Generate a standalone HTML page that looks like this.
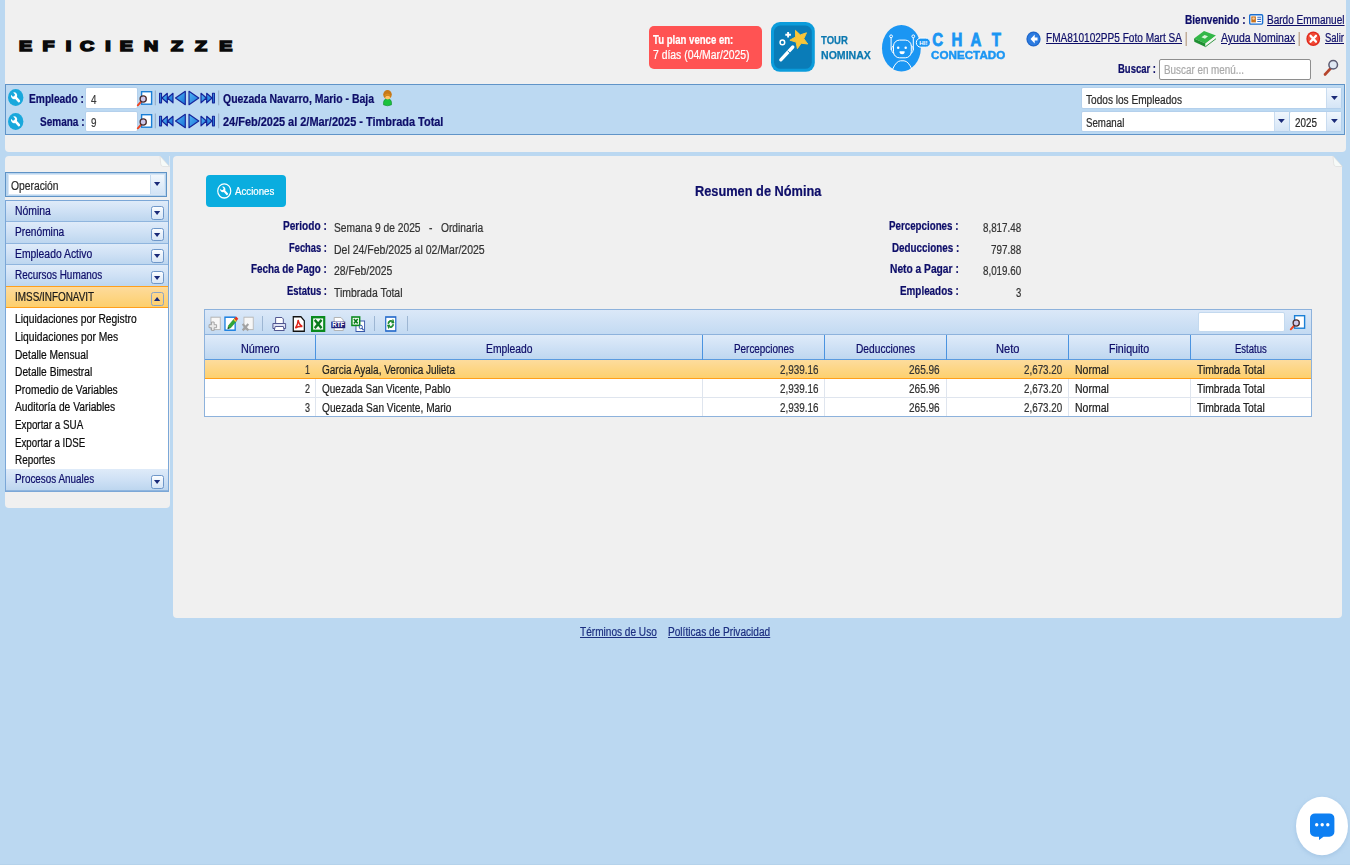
<!DOCTYPE html>
<html lang="es">
<head>
<meta charset="utf-8">
<title>Resumen de Nómina</title>
<style>
*{box-sizing:border-box;margin:0;padding:0}
html,body{width:1350px;height:865px;overflow:hidden}
body{position:relative;background:#bbd8f1;font-family:"Liberation Sans",sans-serif;font-size:12px;color:#2b2b2b}
.t{position:absolute;white-space:nowrap;transform-origin:0 50%;display:block;-webkit-text-stroke:.22px currentColor}
.u{text-decoration:underline}
.abs{position:absolute}
.panel{position:absolute;background:#f0f0f0}
svg{position:absolute;overflow:visible}
</style>
</head>
<body>
<header>
<div class="panel" style="left:4.6px;top:0;width:1341px;height:152px;border-radius:0 0 4px 4px"></div>
<svg style="left:0;top:30px" width="260" height="32"><text transform="scale(1.400 1)" x="13.5 30.4 46.9 57.1 75.1 85.5 102.8 122.1 139.2 156.7" y="21.3" font-family="Liberation Sans, sans-serif" font-weight="700" font-size="14" fill="#0a0a0a" stroke="#0a0a0a" stroke-width="1.5" stroke-linejoin="miter">EFICIENZZE</text></svg>
<div class="abs" style="left:649px;top:25.5px;width:113px;height:43.5px;background:#ff5353;border-radius:5px"></div>
<span class="t" style="left:652.7px;top:31.5px;font-size:12px;line-height:17px;color:#fff;font-weight:700;transform:scaleX(0.7993);">Tu plan vence en:</span>
<span class="t" style="left:652.7px;top:46.5px;font-size:12px;line-height:17px;color:#fff;transform:scaleX(0.8662);">7 días (04/Mar/2025)</span>
<svg style="left:770.9px;top:22px" width="43.8" height="49.800" viewBox="0 0 43.800 49.800">
<rect width="43.800" height="49.800" rx="9" fill="#0b9cdb"/><rect x="3" y="3.500" width="37.800" height="43.300" rx="6.500" fill="#0a7cb8"/>
<path d="M9.800 37.800L21.800 25" stroke="#fff" stroke-width="3.300" stroke-linecap="round"/><path d="M16.600 28.800l2.600 2.400" stroke="#0a7cb8" stroke-width=".9"/>
<path d="M24.5 8.4L29.3 12.9L35.5 10.8L32.8 16.7L36.7 22.0L30.2 21.2L26.4 26.6L25.1 20.1L18.9 18.2L24.6 15.0z" fill="#f9c639" stroke="#f9c639" stroke-width="1" stroke-linejoin="round"/>
<circle cx="11.400" cy="20.400" r="2.300" fill="none" stroke="#fff" stroke-width="1.500"/><path d="M17.100 9.900v5.600M14.300 12.700h5.600" stroke="#fff" stroke-width="1.900"/></svg>
<span class="t" style="left:821.1px;top:32.6px;font-size:10.5px;line-height:15px;color:#0b78b0;font-weight:700;transform:scaleX(0.9066);-webkit-text-stroke:.25px #0b78b0;">TOUR</span>
<span class="t" style="left:821.1px;top:48.4px;font-size:10.5px;line-height:15px;color:#0b78b0;font-weight:700;transform:scaleX(1.0062);-webkit-text-stroke:.25px #0b78b0;">NOMINAX</span>
<svg style="left:881.5px;top:24.5px" width="50" height="47" viewBox="0 0 50 47">
<ellipse cx="19.4" cy="23.2" rx="19.4" ry="23.2" fill="#1b96f3"/>
<g fill="none" stroke="#fff" stroke-width="1">
<path d="M9.1 25V12.8M31.300 25V12.800"/><circle cx="9.100" cy="11.300" r="1.400"/><circle cx="31.300" cy="11.300" r="1.400"/>
<rect x="11.500" y="15.100" width="17.800" height="17.700" rx="6"/>
<path d="M11.500 20.500Q7.500 24 11.500 28.500M29.300 20.500Q33.300 24 29.300 28.500"/>
<path d="M10.500 44.500Q14 36.200 18.500 35.800H22Q26.500 36.200 30 44.500"/>
</g>
<circle cx="16.200" cy="22.700" r="1.250" fill="#fff"/><circle cx="23.700" cy="22.700" r="1.250" fill="#fff"/><path d="M17.600 26.200h5v1a2.500 2 0 0 1-5 0z" fill="#fff"/>
<rect x="34.300" y="13.100" width="14.100" height="9.100" rx="4.500" fill="#1b96f3" stroke="#fff" stroke-width="1"/>
<text x="37.300" y="20" font-family="Liberation Sans, sans-serif" font-weight="700" font-size="5.500" fill="#fff" textLength="8.200" lengthAdjust="spacingAndGlyphs">HI!</text>
</svg>
<svg style="left:0;top:26px" width="1020" height="26"><text transform="scale(0.860 1)" x="1084.0 1106.3 1128.5 1153.3" y="20.200" font-family="Liberation Sans, sans-serif" font-weight="700" font-size="17.500" fill="#1b96f3" stroke="#1b96f3" stroke-width=".8">CHAT</text></svg>
<span class="t" style="left:931.2px;top:46.7px;font-size:11.2px;line-height:16px;color:#1b96f3;font-weight:700;transform:scaleX(1.0426);-webkit-text-stroke:.45px #1b96f3;">CONECTADO</span>
<span class="t" style="left:1185.0px;top:12.3px;font-size:12px;line-height:17px;color:#0e0e69;font-weight:700;transform:scaleX(0.8401);">Bienvenido :</span>
<svg style="left:1248.600px;top:13.700px" width="14.300" height="10.800" viewBox="0 0 14.300 10.800"><rect x=".7" y=".7" width="12.900" height="9.400" rx="1" fill="#fff" stroke="#1a6fd0" stroke-width="1.400"/><rect x="2.300" y="2.400" width="4.600" height="6" fill="#c9731d"/><circle cx="4.600" cy="4.500" r="1.300" fill="#f6c99a"/><path d="M8.300 3.300h3.800M8.300 5.400h3.800M8.300 7.500h3.800" stroke="#3a6fc4" stroke-width="1.100"/></svg>
<span class="t u" style="left:1266.5px;top:11.8px;font-size:12px;line-height:17px;color:#0e0e69;transform:scaleX(0.8359);">Bardo Emmanuel</span>
<svg style="left:1026px;top:30.500px" width="15" height="16" viewBox="0 0 16 16" preserveAspectRatio="none"><circle cx="8" cy="8" r="7.600" fill="#1f66c9"/><circle cx="8" cy="8" r="6.300" fill="#2c7be0"/><path d="M9.300 3.600L4.800 8l4.500 4.400V9.600h3V6.400h-3z" fill="#fff"/></svg>
<span class="t u" style="left:1046.0px;top:30.3px;font-size:12px;line-height:17px;color:#0e0e69;transform:scaleX(0.8391);">FMA810102PP5 Foto Mart SA</span>
<span class="t" style="left:1185.3px;top:28.2px;font-size:14px;line-height:20px;color:#a98a6c;transform:scaleX(0.6592);">|</span>
<svg style="left:1193px;top:29.500px" width="23" height="17" viewBox="0 0 23 17"><path d="M1 8.500L11 1l12 4.500L12.500 13.500z" fill="#33b748"/><path d="M1 8.500l11.500 5v3.400L1.300 11.700z" fill="#1f8f32"/><path d="M12.500 13.500L23 5.500v2.700l-10.500 8z" fill="#f4f4f0"/><path d="M12.500 16.700L23 8.700" stroke="#1f8f32" stroke-width=".9"/><path d="M8.500 7.300l3-2.300 3.500 1.300-3 2.400z" fill="#d8f3d8"/></svg>
<span class="t u" style="left:1221.0px;top:30.3px;font-size:12px;line-height:17px;color:#0e0e69;transform:scaleX(0.8757);">Ayuda Nominax</span>
<span class="t" style="left:1297.8px;top:28.2px;font-size:14px;line-height:20px;color:#a98a6c;transform:scaleX(0.6592);">|</span>
<svg style="left:1306px;top:31px" width="14.500" height="15.500" viewBox="0 0 16 16" preserveAspectRatio="none"><circle cx="8" cy="8" r="7.600" fill="#e0281c"/><circle cx="8" cy="8" r="6.200" fill="#f04a35"/><path d="M5 5l6 6M11 5l-6 6" stroke="#fff" stroke-width="2.400" stroke-linecap="round"/></svg>
<span class="t u" style="left:1325.0px;top:30.3px;font-size:12px;line-height:17px;color:#0e0e69;transform:scaleX(0.7912);">Salir</span>
<span class="t" style="left:1118.0px;top:60.8px;font-size:12px;line-height:17px;color:#0e0e69;font-weight:700;transform:scaleX(0.7912);">Buscar :</span>
<div class="abs" style="left:1159px;top:58.600px;width:152px;height:21.400px;background:#fff;border:1px solid #8e8e8e;border-radius:2px"></div>
<span class="t" style="left:1164.0px;top:62.0px;font-size:12px;line-height:17px;color:#a9a9a9;transform:scaleX(0.8214);">Buscar en menú...</span>
<svg style="left:1323px;top:58.500px" width="16" height="17" viewBox="0 0 16 17"><path d="M2 15.500L8 9" stroke="#b5452c" stroke-width="2.600" stroke-linecap="round"/><circle cx="10.200" cy="5.800" r="4.300" fill="#dfe7f3" stroke="#5a5a72" stroke-width="1.500"/></svg>
<div class="abs" style="left:5px;top:84.300px;width:1340px;height:50.500px;background:#bcd9f2;border:1px solid #6094c8"></div>
<svg style="left:8px;top:89.3px" width="15.4" height="17" viewBox="0 0 16 16" preserveAspectRatio="none"><circle cx="8" cy="8" r="8" fill="#19a8dc"/><path transform="translate(16 0) scale(-1 1)" d="M10.600 3.200a3.200 3.200 0 0 0-3.900 4.300L3.600 10.600a1.300 1.300 0 0 0 1.800 1.800l3.100-3.100a3.200 3.200 0 0 0 4.300-3.900L10.900 7.300 9.300 6.700 8.700 5.100z" fill="#fff"/></svg>
<svg style="left:8px;top:112.7px" width="15.4" height="17" viewBox="0 0 16 16" preserveAspectRatio="none"><circle cx="8" cy="8" r="8" fill="#19a8dc"/><path transform="translate(16 0) scale(-1 1)" d="M10.600 3.200a3.200 3.200 0 0 0-3.900 4.300L3.600 10.600a1.300 1.300 0 0 0 1.800 1.800l3.100-3.100a3.200 3.200 0 0 0 4.300-3.900L10.900 7.300 9.300 6.700 8.700 5.100z" fill="#fff"/></svg>
<span class="t" style="left:29.0px;top:91.0px;font-size:12px;line-height:17px;color:#0e0e69;font-weight:700;transform:scaleX(0.8502);">Empleado :</span>
<span class="t" style="left:39.5px;top:114.3px;font-size:12px;line-height:17px;color:#0e0e69;font-weight:700;transform:scaleX(0.8340);">Semana :</span>
<div class="abs" style="left:84.7px;top:86.7px;width:53.4px;height:22.4px;background:#fff;border:1px solid #b4d0ec;border-radius:2px"></div>
<div class="abs" style="left:84.7px;top:110.5px;width:53.4px;height:21.8px;background:#fff;border:1px solid #b4d0ec;border-radius:2px"></div>
<span class="t" style="left:91.0px;top:91.5px;font-size:12px;line-height:17px;color:#3a3a3a;transform:scaleX(0.8224);">4</span>
<span class="t" style="left:91.0px;top:115.0px;font-size:12px;line-height:17px;color:#3a3a3a;transform:scaleX(0.8224);">9</span>
<svg style="left:136.5px;top:91px" width="16" height="15" viewBox="0 0 16 15"><rect x="4.600" y=".7" width="10" height="12.500" fill="#fff" stroke="#1a7fd6" stroke-width="1.400"/><path d="M.8 14.300L3.800 11" stroke="#f0451f" stroke-width="1.900" stroke-linecap="round"/><circle cx="6.200" cy="8" r="3.100" fill="#cfc8ea" stroke="#4a2c2c" stroke-width="1.300"/></svg>
<svg style="left:136.5px;top:114.3px" width="16" height="15" viewBox="0 0 16 15"><rect x="4.600" y=".7" width="10" height="12.500" fill="#fff" stroke="#1a7fd6" stroke-width="1.400"/><path d="M.8 14.300L3.800 11" stroke="#f0451f" stroke-width="1.900" stroke-linecap="round"/><circle cx="6.200" cy="8" r="3.100" fill="#cfc8ea" stroke="#4a2c2c" stroke-width="1.300"/></svg>
<svg width="0" height="0" style="left:0;top:0"><defs><linearGradient id="ng" x1="0" y1="0" x2="1" y2="1"><stop offset="0" stop-color="#55b8f6"/><stop offset="1" stop-color="#1670d6"/></linearGradient></defs></svg>
<svg style="left:154px;top:89.9px" width="68" height="16" viewBox="0 0 68 16">
<path d="M1.300 .5v14.800M64.700 .5v14.800" stroke="#93a9c4" stroke-width="1"/>
<g fill="url(#ng)" stroke="#16259a" stroke-width="1.150" stroke-linejoin="round">
<rect x="5.600" y="3.200" width="1.900" height="9.600"/><path d="M13.300 3.200L7.900 8l5.400 4.800zM19 3.200L13.600 8l5.400 4.800z"/>
<path d="M31.300 1.300L21.500 8l9.800 6.700z"/>
<path d="M35 1.300L44.800 8 35 14.700z"/>
<path d="M47 3.200L52.400 8 47 12.800zM52.700 3.200L58.100 8l-5.400 4.800z"/><rect x="58.500" y="3.200" width="1.900" height="9.600"/>
</g></svg>
<svg style="left:154px;top:113.2px" width="68" height="16" viewBox="0 0 68 16">
<path d="M1.300 .5v14.800M64.700 .5v14.800" stroke="#93a9c4" stroke-width="1"/>
<g fill="url(#ng)" stroke="#16259a" stroke-width="1.150" stroke-linejoin="round">
<rect x="5.600" y="3.200" width="1.900" height="9.600"/><path d="M13.300 3.200L7.900 8l5.400 4.800zM19 3.200L13.600 8l5.400 4.800z"/>
<path d="M31.300 1.300L21.500 8l9.800 6.700z"/>
<path d="M35 1.300L44.800 8 35 14.700z"/>
<path d="M47 3.200L52.400 8 47 12.800zM52.700 3.200L58.100 8l-5.400 4.800z"/><rect x="58.500" y="3.200" width="1.900" height="9.600"/>
</g></svg>
<span class="t" style="left:223.0px;top:91.0px;font-size:12px;line-height:17px;color:#0e0e69;font-weight:700;transform:scaleX(0.8709);">Quezada Navarro, Mario - Baja</span>
<span class="t" style="left:223.0px;top:114.3px;font-size:12px;line-height:17px;color:#0e0e69;font-weight:700;transform:scaleX(0.9120);">24/Feb/2025 al 2/Mar/2025 - Timbrada Total</span>
<svg style="left:383.200px;top:89.900px" width="9" height="16" viewBox="0 0 9 16"><path d="M.5 14.800Q-.2 9 4.500 8.600 9.200 9 8.500 14.800 4.500 16.800 .5 14.800z" fill="#19c23c" stroke="#0f8a2a" stroke-width=".6"/><ellipse cx="4.500" cy="4.600" rx="4.300" ry="4.500" fill="#c67818"/><ellipse cx="4.700" cy="7.600" rx="2.500" ry="1.900" fill="#ffc468"/><path d="M1.200 6.500Q4.500 4.500 7.800 6.500 7 3.500 4.500 3.500T1.200 6.500z" fill="#d98c20"/></svg>
<div class="abs" style="left:1080.5px;top:86.6px;width:261.9px;height:22.4px;background:#fff;border:1px solid #b4d0ec;border-radius:2px"></div>
<div class="abs" style="left:1326.4px;top:87.6px;width:15px;height:20.4px;background:linear-gradient(#f0f6fd,#d5e5f6);border-left:1px solid #c9dcf0"></div>
<svg style="left:1330.7px;top:95.8px" width="6.800" height="4" viewBox="0 0 6.800 4"><path d="M0 0h6.800L3.400 4z" fill="#1a2a78"/></svg>
<div class="abs" style="left:1080.5px;top:110.8px;width:209.3px;height:21.2px;background:#fff;border:1px solid #b4d0ec;border-radius:2px"></div>
<div class="abs" style="left:1273.8px;top:111.8px;width:15px;height:19.2px;background:linear-gradient(#f0f6fd,#d5e5f6);border-left:1px solid #c9dcf0"></div>
<svg style="left:1278.1px;top:119.4px" width="6.800" height="4" viewBox="0 0 6.800 4"><path d="M0 0h6.800L3.400 4z" fill="#1a2a78"/></svg>
<div class="abs" style="left:1289.3px;top:110.8px;width:53.1px;height:21.2px;background:#fff;border:1px solid #b4d0ec;border-radius:2px"></div>
<div class="abs" style="left:1326.4px;top:111.8px;width:15px;height:19.2px;background:linear-gradient(#f0f6fd,#d5e5f6);border-left:1px solid #c9dcf0"></div>
<svg style="left:1330.7px;top:119.4px" width="6.800" height="4" viewBox="0 0 6.800 4"><path d="M0 0h6.800L3.400 4z" fill="#1a2a78"/></svg>
<span class="t" style="left:1086.0px;top:91.6px;font-size:12px;line-height:17px;color:#2b2b2b;transform:scaleX(0.8415);">Todos los Empleados</span>
<span class="t" style="left:1086.0px;top:114.9px;font-size:12px;line-height:17px;color:#2b2b2b;transform:scaleX(0.8084);">Semanal</span>
<span class="t" style="left:1294.6px;top:114.9px;font-size:12px;line-height:17px;color:#2b2b2b;transform:scaleX(0.8201);">2025</span>
</header>
<aside>
<div class="panel" style="left:4.6px;top:156px;width:165.2px;height:352.4px;border-radius:4px 0 4px 4px"></div>
<svg style="left:160.4px;top:156px" width="9.400" height="10.500" viewBox="0 0 9.400 10.500"><path d="M0 0H9.400V10.500Z" fill="#bbd8f1"/><path d="M0 0L9.400 10.500H2.800Q.6 10 .7 7.500Z" fill="#f6faf8" stroke="#d9d9d9" stroke-width=".6"/></svg>
<div class="abs" style="left:5.200px;top:172.100px;width:162px;height:25.300px;background:#b9d5ef;border:1px solid #5f93c6"></div>
<div class="abs" style="left:7.600px;top:174.300px;width:157.200px;height:20.600px;background:#fff;border:1px solid #d7e6f5"></div>
<div class="abs" style="left:150.400px;top:175.300px;width:13.600px;height:18.800px;background:linear-gradient(#f1f7fd,#d3e4f6);border-left:1px solid #c3d9ef"></div>
<svg style="left:154px;top:182.200px" width="6.200" height="4" viewBox="0 0 6.200 4"><path d="M0 0h6.200L3.100 4z" fill="#1a2a78"/></svg>
<span class="t" style="left:11.4px;top:177.5px;font-size:12px;line-height:17px;color:#2b2b2b;transform:scaleX(0.8596);">Operación</span>
<div class="abs" style="left:5.4px;top:199.800px;width:163.4px;height:292.500px;background:#fff;border:1px solid #7ba7d7"></div>
<div class="abs" style="left:6.4px;top:200.6px;width:161.4px;height:21.55px;background:linear-gradient(#dfebf9 0%,#cfe1f5 50%,#bdd6ef 100%);border-bottom:1px solid #8fb5de"></div>
<div class="abs" style="left:151px;top:206.1px;width:12.800px;height:13.800px;background:linear-gradient(#fbfdff,#d6e5f6);border:1px solid #6f97c9;border-radius:2.500px"></div>
<svg style="left:154.300px;top:211.1px" width="6.200" height="4" viewBox="0 0 6.200 4"><path d="M0 0h6.200L3.100 4z" fill="#1a2a78"/></svg>
<span class="t" style="left:15.3px;top:202.6px;font-size:12px;line-height:17px;color:#0e0e69;transform:scaleX(0.8680);">Nómina</span>
<div class="abs" style="left:6.4px;top:222.15px;width:161.4px;height:21.55px;background:linear-gradient(#dfebf9 0%,#cfe1f5 50%,#bdd6ef 100%);border-bottom:1px solid #8fb5de"></div>
<div class="abs" style="left:151px;top:227.6px;width:12.800px;height:13.800px;background:linear-gradient(#fbfdff,#d6e5f6);border:1px solid #6f97c9;border-radius:2.500px"></div>
<svg style="left:154.300px;top:232.6px" width="6.200" height="4" viewBox="0 0 6.200 4"><path d="M0 0h6.200L3.100 4z" fill="#1a2a78"/></svg>
<span class="t" style="left:15.3px;top:223.9px;font-size:12px;line-height:17px;color:#0e0e69;transform:scaleX(0.8478);">Prenómina</span>
<div class="abs" style="left:6.4px;top:243.70000000000002px;width:161.4px;height:21.55px;background:linear-gradient(#dfebf9 0%,#cfe1f5 50%,#bdd6ef 100%);border-bottom:1px solid #8fb5de"></div>
<div class="abs" style="left:151px;top:249.2px;width:12.800px;height:13.800px;background:linear-gradient(#fbfdff,#d6e5f6);border:1px solid #6f97c9;border-radius:2.500px"></div>
<svg style="left:154.300px;top:254.2px" width="6.200" height="4" viewBox="0 0 6.200 4"><path d="M0 0h6.200L3.100 4z" fill="#1a2a78"/></svg>
<span class="t" style="left:15.3px;top:245.5px;font-size:12px;line-height:17px;color:#0e0e69;transform:scaleX(0.8636);">Empleado Activo</span>
<div class="abs" style="left:6.4px;top:265.25px;width:161.4px;height:21.55px;background:linear-gradient(#dfebf9 0%,#cfe1f5 50%,#bdd6ef 100%);border-bottom:1px solid #8fb5de"></div>
<div class="abs" style="left:151px;top:270.7px;width:12.800px;height:13.800px;background:linear-gradient(#fbfdff,#d6e5f6);border:1px solid #6f97c9;border-radius:2.500px"></div>
<svg style="left:154.300px;top:275.7px" width="6.200" height="4" viewBox="0 0 6.200 4"><path d="M0 0h6.200L3.100 4z" fill="#1a2a78"/></svg>
<span class="t" style="left:15.3px;top:266.8px;font-size:12px;line-height:17px;color:#0e0e69;transform:scaleX(0.8275);">Recursos Humanos</span>
<div class="abs" style="left:6.4px;top:286.0px;width:161.4px;height:22.4px;background:linear-gradient(#fddb9c,#fdcf6c);border-top:1px solid #ff9f1c;border-bottom:1.400px solid #ff9f1c"></div>
<div class="abs" style="left:151px;top:292.3px;width:12.800px;height:13.800px;background:transparent;border:1px solid #8aa3c4;border-radius:2.500px"></div>
<svg style="left:154.300px;top:297.3px" width="6.200" height="4" viewBox="0 0 6.200 4"><path d="M0 4h6.200L3.100 0z" fill="#1a2a78"/></svg>
<span class="t" style="left:15.3px;top:288.8px;font-size:12px;line-height:17px;color:#1a1a1a;transform:scaleX(0.8267);">IMSS/INFONAVIT</span>
<span class="t" style="left:15.3px;top:311.4px;font-size:12px;line-height:17px;color:#0c0c0c;transform:scaleX(0.8565);">Liquidaciones por Registro</span>
<span class="t" style="left:15.3px;top:329.0px;font-size:12px;line-height:17px;color:#0c0c0c;transform:scaleX(0.8594);">Liquidaciones por Mes</span>
<span class="t" style="left:15.3px;top:346.6px;font-size:12px;line-height:17px;color:#0c0c0c;transform:scaleX(0.8507);">Detalle Mensual</span>
<span class="t" style="left:15.3px;top:364.2px;font-size:12px;line-height:17px;color:#0c0c0c;transform:scaleX(0.8511);">Detalle Bimestral</span>
<span class="t" style="left:15.3px;top:381.8px;font-size:12px;line-height:17px;color:#0c0c0c;transform:scaleX(0.8522);">Promedio de Variables</span>
<span class="t" style="left:15.3px;top:399.4px;font-size:12px;line-height:17px;color:#0c0c0c;transform:scaleX(0.8550);">Auditoría de Variables</span>
<span class="t" style="left:15.3px;top:417.0px;font-size:12px;line-height:17px;color:#0c0c0c;transform:scaleX(0.8180);">Exportar a SUA</span>
<span class="t" style="left:15.3px;top:434.6px;font-size:12px;line-height:17px;color:#0c0c0c;transform:scaleX(0.8097);">Exportar a IDSE</span>
<span class="t" style="left:15.3px;top:452.2px;font-size:12px;line-height:17px;color:#0c0c0c;transform:scaleX(0.8254);">Reportes</span>
<div class="abs" style="left:6.4px;top:468.500px;width:161.4px;height:1px;background:#8fb5de"></div>
<div class="abs" style="left:6.4px;top:469.3px;width:161.4px;height:21.9px;background:linear-gradient(#dfebf9 0%,#cfe1f5 50%,#bdd6ef 100%);border-bottom:1px solid #8fb5de"></div>
<div class="abs" style="left:151px;top:474.9px;width:12.800px;height:13.800px;background:linear-gradient(#fbfdff,#d6e5f6);border:1px solid #6f97c9;border-radius:2.500px"></div>
<svg style="left:154.300px;top:479.9px" width="6.200" height="4" viewBox="0 0 6.200 4"><path d="M0 0h6.200L3.100 4z" fill="#1a2a78"/></svg>
<span class="t" style="left:15.3px;top:470.7px;font-size:12px;line-height:17px;color:#0e0e69;transform:scaleX(0.8245);">Procesos Anuales</span>
</aside>
<main>
<div class="panel" style="left:173px;top:156px;width:1169.3px;height:461.8px;border-radius:4px 0 4px 4px"></div>
<svg style="left:1332.9px;top:156px" width="9.400" height="10.500" viewBox="0 0 9.400 10.500"><path d="M0 0H9.400V10.500Z" fill="#bbd8f1"/><path d="M0 0L9.400 10.500H2.800Q.6 10 .7 7.500Z" fill="#f6faf8" stroke="#d9d9d9" stroke-width=".6"/></svg>
<div class="abs" style="left:206px;top:175px;width:79.700px;height:32px;background:#0aaddf;border-radius:4px"></div>
<svg style="left:216.800px;top:183px" width="14.500" height="15.800" viewBox="0 0 16 16" preserveAspectRatio="none"><circle cx="8" cy="8" r="7.200" fill="none" stroke="#fff" stroke-width="1.300"/><path transform="translate(16 0) scale(-1 1)" d="M10.400 3.700a2.900 2.900 0 0 0-3.500 3.900L4 10.500a1.150 1.150 0 0 0 1.600 1.600l2.900-2.900a2.900 2.900 0 0 0 3.900-3.500L10.700 7.400 9.200 6.900 8.700 5.400z" fill="#fff"/></svg>
<span class="t" style="left:235.0px;top:183.7px;font-size:11px;line-height:15px;color:#fff;transform:scaleX(0.8804);">Acciones</span>
<span class="t" style="left:694.8px;top:181.4px;font-size:14.5px;line-height:20px;color:#0e0e69;font-weight:700;transform:scaleX(0.8813);">Resumen de Nómina</span>
<span class="t" style="left:283.2px;top:218.3px;font-size:12px;line-height:17px;color:#0e0e69;font-weight:700;transform:scaleX(0.8421);">Periodo :</span>
<span class="t" style="left:289.1px;top:239.7px;font-size:12px;line-height:17px;color:#0e0e69;font-weight:700;transform:scaleX(0.7784);">Fechas :</span>
<span class="t" style="left:251.2px;top:261.3px;font-size:12px;line-height:17px;color:#0e0e69;font-weight:700;transform:scaleX(0.8236);">Fecha de Pago :</span>
<span class="t" style="left:287.0px;top:282.8px;font-size:12px;line-height:17px;color:#0e0e69;font-weight:700;transform:scaleX(0.7891);">Estatus :</span>
<span class="t" style="left:333.9px;top:220.4px;font-size:12px;line-height:17px;color:#333;transform:scaleX(0.8531);white-space:pre;">Semana 9 de 2025   -   Ordinaria</span>
<span class="t" style="left:333.9px;top:241.8px;font-size:12px;line-height:17px;color:#333;transform:scaleX(0.8755);white-space:pre;">Del 24/Feb/2025 al 02/Mar/2025</span>
<span class="t" style="left:333.9px;top:263.3px;font-size:12px;line-height:17px;color:#333;transform:scaleX(0.8651);white-space:pre;">28/Feb/2025</span>
<span class="t" style="left:333.9px;top:285.0px;font-size:12px;line-height:17px;color:#333;transform:scaleX(0.8704);white-space:pre;">Timbrada Total</span>
<span class="t" style="left:889.3px;top:218.2px;font-size:12px;line-height:17px;color:#0e0e69;font-weight:700;transform:scaleX(0.8129);">Percepciones :</span>
<span class="t" style="left:891.5px;top:239.9px;font-size:12px;line-height:17px;color:#0e0e69;font-weight:700;transform:scaleX(0.8192);">Deducciones :</span>
<span class="t" style="left:889.9px;top:261.4px;font-size:12px;line-height:17px;color:#0e0e69;font-weight:700;transform:scaleX(0.8525);">Neto a Pagar :</span>
<span class="t" style="left:900.0px;top:282.9px;font-size:12px;line-height:17px;color:#0e0e69;font-weight:700;transform:scaleX(0.8226);">Empleados :</span>
<span class="t" style="left:983.2px;top:220.1px;font-size:12px;line-height:17px;color:#333;transform:scaleX(0.8155);">8,817.48</span>
<span class="t" style="left:991.2px;top:241.7px;font-size:12px;line-height:17px;color:#333;transform:scaleX(0.8201);">797.88</span>
<span class="t" style="left:983.2px;top:263.4px;font-size:12px;line-height:17px;color:#333;transform:scaleX(0.8155);">8,019.60</span>
<span class="t" style="left:1016.0px;top:284.9px;font-size:12px;line-height:17px;color:#333;transform:scaleX(0.7925);">3</span>
<div class="abs" style="left:204px;top:309.400px;width:1108.4px;height:107.400px;background:#fff;border:1px solid #8db2dc"></div>
<div class="abs" style="left:205px;top:310.400px;width:1106.4px;height:24px;background:linear-gradient(#dbe8f8,#c3daf2)"></div>
<div class="abs" style="left:205px;top:334.400px;width:1106.4px;height:26px;background:linear-gradient(#dfebf9 0%,#cfe1f5 50%,#bed7f0 100%);border-top:1px solid #8db2dc;border-bottom:1px solid #5b9bdf"></div>
<div class="abs" style="left:315.0px;top:335.400px;width:1px;height:24.500px;background:#4a93e0"></div>
<div class="abs" style="left:315.0px;top:360.400px;width:1px;height:55.500px;background:#dfe5ee"></div>
<div class="abs" style="left:701.7px;top:335.400px;width:1px;height:24.500px;background:#4a93e0"></div>
<div class="abs" style="left:701.7px;top:360.400px;width:1px;height:55.500px;background:#dfe5ee"></div>
<div class="abs" style="left:824.0px;top:335.400px;width:1px;height:24.500px;background:#4a93e0"></div>
<div class="abs" style="left:824.0px;top:360.400px;width:1px;height:55.500px;background:#dfe5ee"></div>
<div class="abs" style="left:945.7px;top:335.400px;width:1px;height:24.500px;background:#4a93e0"></div>
<div class="abs" style="left:945.7px;top:360.400px;width:1px;height:55.500px;background:#dfe5ee"></div>
<div class="abs" style="left:1067.7px;top:335.400px;width:1px;height:24.500px;background:#4a93e0"></div>
<div class="abs" style="left:1067.7px;top:360.400px;width:1px;height:55.500px;background:#dfe5ee"></div>
<div class="abs" style="left:1189.7px;top:335.400px;width:1px;height:24.500px;background:#4a93e0"></div>
<div class="abs" style="left:1189.7px;top:360.400px;width:1px;height:55.500px;background:#dfe5ee"></div>
<div class="abs" style="left:205px;top:360.400px;width:1106.4px;height:18.600px;background:linear-gradient(#fddc9d,#fdd06e);border-bottom:1.300px solid #ff9f1a"></div>
<div class="abs" style="left:205px;top:397.300px;width:1106.4px;height:1px;background:#dfe5ee"></div>
<span class="t" style="left:241.0px;top:341.0px;font-size:12px;line-height:17px;color:#0e0e69;transform:scaleX(0.9019);">Número</span>
<span class="t" style="left:486.0px;top:341.0px;font-size:12px;line-height:17px;color:#0e0e69;transform:scaleX(0.8604);">Empleado</span>
<span class="t" style="left:734.0px;top:341.0px;font-size:12px;line-height:17px;color:#0e0e69;transform:scaleX(0.8251);">Percepciones</span>
<span class="t" style="left:856.0px;top:341.0px;font-size:12px;line-height:17px;color:#0e0e69;transform:scaleX(0.8505);">Deducciones</span>
<span class="t" style="left:995.5px;top:341.0px;font-size:12px;line-height:17px;color:#0e0e69;transform:scaleX(0.9267);">Neto</span>
<span class="t" style="left:1108.8px;top:341.0px;font-size:12px;line-height:17px;color:#0e0e69;transform:scaleX(0.8863);">Finiquito</span>
<span class="t" style="left:1235.2px;top:341.0px;font-size:12px;line-height:17px;color:#0e0e69;transform:scaleX(0.7944);">Estatus</span>
<span class="t" style="left:304.5px;top:362.3px;font-size:12px;line-height:17px;color:#333;transform:scaleX(0.7477);">1</span>
<span class="t" style="left:322.0px;top:362.3px;font-size:12px;line-height:17px;color:#222;transform:scaleX(0.8353);">Garcia Ayala, Veronica Julieta</span>
<span class="t" style="left:780.0px;top:362.3px;font-size:12px;line-height:17px;color:#333;transform:scaleX(0.8219);">2,939.16</span>
<span class="t" style="left:909.3px;top:362.3px;font-size:12px;line-height:17px;color:#333;transform:scaleX(0.8364);">265.96</span>
<span class="t" style="left:1023.5px;top:362.3px;font-size:12px;line-height:17px;color:#333;transform:scaleX(0.8177);">2,673.20</span>
<span class="t" style="left:1075.0px;top:362.3px;font-size:12px;line-height:17px;color:#222;transform:scaleX(0.8740);">Normal</span>
<span class="t" style="left:1196.8px;top:362.3px;font-size:12px;line-height:17px;color:#222;transform:scaleX(0.8602);">Timbrada Total</span>
<span class="t" style="left:304.5px;top:381.2px;font-size:12px;line-height:17px;color:#333;transform:scaleX(0.7477);">2</span>
<span class="t" style="left:322.0px;top:381.2px;font-size:12px;line-height:17px;color:#222;transform:scaleX(0.8350);">Quezada San Vicente, Pablo</span>
<span class="t" style="left:780.0px;top:381.2px;font-size:12px;line-height:17px;color:#333;transform:scaleX(0.8219);">2,939.16</span>
<span class="t" style="left:909.3px;top:381.2px;font-size:12px;line-height:17px;color:#333;transform:scaleX(0.8364);">265.96</span>
<span class="t" style="left:1023.5px;top:381.2px;font-size:12px;line-height:17px;color:#333;transform:scaleX(0.8177);">2,673.20</span>
<span class="t" style="left:1075.0px;top:381.2px;font-size:12px;line-height:17px;color:#222;transform:scaleX(0.8740);">Normal</span>
<span class="t" style="left:1196.8px;top:381.2px;font-size:12px;line-height:17px;color:#222;transform:scaleX(0.8602);">Timbrada Total</span>
<span class="t" style="left:304.5px;top:400.0px;font-size:12px;line-height:17px;color:#333;transform:scaleX(0.7477);">3</span>
<span class="t" style="left:322.0px;top:400.0px;font-size:12px;line-height:17px;color:#222;transform:scaleX(0.8452);">Quezada San Vicente, Mario</span>
<span class="t" style="left:780.0px;top:400.0px;font-size:12px;line-height:17px;color:#333;transform:scaleX(0.8219);">2,939.16</span>
<span class="t" style="left:909.3px;top:400.0px;font-size:12px;line-height:17px;color:#333;transform:scaleX(0.8364);">265.96</span>
<span class="t" style="left:1023.5px;top:400.0px;font-size:12px;line-height:17px;color:#333;transform:scaleX(0.8177);">2,673.20</span>
<span class="t" style="left:1075.0px;top:400.0px;font-size:12px;line-height:17px;color:#222;transform:scaleX(0.8740);">Normal</span>
<span class="t" style="left:1196.8px;top:400.0px;font-size:12px;line-height:17px;color:#222;transform:scaleX(0.8602);">Timbrada Total</span>
<div class="abs" style="left:1198px;top:312.300px;width:86.500px;height:19.600px;background:#fff;border:1px solid #c3d9ef;border-radius:2px"></div>
<svg style="left:1289.5px;top:314.6px" width="16" height="15" viewBox="0 0 16 15"><rect x="4.600" y=".7" width="10" height="12.500" fill="#fff" stroke="#1a7fd6" stroke-width="1.400"/><path d="M.8 14.300L3.800 11" stroke="#f0451f" stroke-width="1.900" stroke-linecap="round"/><circle cx="6.200" cy="8" r="3.100" fill="#cfc8ea" stroke="#4a2c2c" stroke-width="1.300"/></svg>
<svg style="left:207.5px;top:315.8px" width="14.3" height="16" viewBox="0 0 16 16" preserveAspectRatio="none"><rect x="3.300" y="1.200" width="10.400" height="12.400" fill="#f7f7f7" stroke="#b4b4b4"/><path d="M3.900 6v2.700H1.200v3h2.700v2.700h3v-2.700h2.700v-3H6.900V6z" fill="#e9e9e9" stroke="#9a9a9a" stroke-width=".9"/></svg>
<svg style="left:224px;top:315.8px" width="14.3" height="16" viewBox="0 0 16 16" preserveAspectRatio="none"><rect x="1.100" y="1.200" width="11.400" height="13" fill="#fff" stroke="#1a7fe0" stroke-width="1.500"/><path d="M4.200 12.800l.900-3.300 6.600-7 2.400 2.300-6.600 7z" fill="#2ea836" stroke="#1d7a26" stroke-width=".6"/><path d="M10.400 3.800l1.300-1.300 2.400 2.300-1.300 1.300z" fill="#f2c230"/><path d="M11.700 2.500L13.600.5 16 2.800l-1.900 2z" fill="#e8321e"/><path d="M4.200 12.800l.500-1.800 1.300 1.300z" fill="#222"/></svg>
<svg style="left:241px;top:315.8px" width="14.3" height="16" viewBox="0 0 16 16" preserveAspectRatio="none"><rect x="3.300" y="1.200" width="10.400" height="12.400" fill="#f7f7f7" stroke="#b8b8b8"/><path d="M1.800 8l6.400 6.400M8.200 8l-6.400 6.400" stroke="#a2a2a2" stroke-width="2.300"/></svg>
<div class="abs" style="left:262px;top:316px;width:1px;height:15px;background:#9db6d3"></div>
<svg style="left:271.5px;top:315.8px" width="14.5" height="16" viewBox="0 0 16 16" preserveAspectRatio="none"><path d="M4 7V1.500h7L12.500 3v4" fill="#fff" stroke="#4b4f8a"/><path d="M1 7.500h14v5H1z" fill="#dfe3f3" stroke="#4b4f8a"/><path d="M3.500 10.500h9l1 4h-11z" fill="#fff" stroke="#4b4f8a"/></svg>
<svg style="left:291.8px;top:315.8px" width="13.6" height="16" viewBox="0 0 16 16" preserveAspectRatio="none"><path d="M1.500.8h9l4 4v10.400h-13z" fill="#fff" stroke="#111" stroke-width="1.400"/><path d="M4 12c2-2 3-5 3.200-8 .8 3.500 2.500 5.500 5 6.500-3-.3-6 .300-8.200 1.500z" fill="none" stroke="#e0261c" stroke-width="1.600"/></svg>
<svg style="left:310.8px;top:315.8px" width="14.3" height="16" viewBox="0 0 16 16" preserveAspectRatio="none"><rect x="1.200" y="1.200" width="13.600" height="13.600" fill="#f4fbf4" stroke="#0a8a1e" stroke-width="2.400"/><path d="M4.200 3.800l7.600 8.400M11.800 3.800l-7.600 8.400" stroke="#0a7a1c" stroke-width="2.600"/></svg>
<svg style="left:330.8px;top:315.8px" width="14.5" height="16" viewBox="0 0 16 16" preserveAspectRatio="none"><path d="M3.500 1.500h7.500l2.500 2.500v10.500h-10z" fill="#fff" stroke="#b0b0b0"/><rect x=".3" y="5.600" width="15.400" height="6.600" fill="#20207a"/><text x="1.300" y="11.300" font-family="Liberation Sans, sans-serif" font-weight="700" font-size="6.400" fill="#fff" textLength="13.400" lengthAdjust="spacingAndGlyphs">RTF</text></svg>
<svg style="left:350.5px;top:315.8px" width="14.5" height="16" viewBox="0 0 16 16" preserveAspectRatio="none"><rect x="5.500" y="5" width="9.500" height="10.500" fill="#fff" stroke="#3657a8"/><rect x="1" y="1" width="8.600" height="8.400" fill="#f4fbf4" stroke="#0a8a1e" stroke-width="1.600"/><path d="M3.200 3l4.200 4.400M7.400 3l-4.200 4.400" stroke="#0a7a1c" stroke-width="1.700"/><circle cx="10.800" cy="11" r="1.800" fill="none" stroke="#3657a8"/><path d="M12 12.200l2 2" stroke="#3657a8" stroke-width="1.300"/></svg>
<div class="abs" style="left:374px;top:316px;width:1px;height:15px;background:#9db6d3"></div>
<svg style="left:385.3px;top:315.8px" width="11.5" height="16" viewBox="0 0 16 16" preserveAspectRatio="none"><rect x="1" y="1" width="14" height="14" fill="#fff" stroke="#1f66c9" stroke-width="1.600"/><path d="M4 7.500a4 3.300 0 0 1 7-2V3.500l1.500 3.500H9l1.300-1a3 2.500 0 0 0-4.800 1.500zM12 8.500a4 3.300 0 0 1-7 2v2L3.500 9H7l-1.300 1a3 2.500 0 0 0 4.800-1.500z" fill="#1a9a2e" stroke="#0f7a22" stroke-width=".8"/></svg>
<div class="abs" style="left:407px;top:316px;width:1px;height:15px;background:#9db6d3"></div>
</main>
<footer>
<span class="t u" style="left:580.4px;top:623.8px;font-size:12px;line-height:17px;color:#1c2f80;transform:scaleX(0.8405);">Términos de Uso</span>
<span class="t u" style="left:667.6px;top:623.8px;font-size:12px;line-height:17px;color:#1c2f80;transform:scaleX(0.8418);">Políticas de Privacidad</span>
<svg style="left:1290px;top:790px" width="60" height="72" viewBox="0 0 60 72"><defs><filter id="sh" x="-30%" y="-30%" width="160%" height="160%"><feGaussianBlur stdDeviation="2.500"/></filter></defs>
<ellipse cx="32" cy="37.500" rx="26" ry="29.300" fill="#8fb4d8" opacity=".55" filter="url(#sh)"/>
<ellipse cx="32" cy="36" rx="26" ry="29.300" fill="#fff"/>
<path d="M25 23.400h14.400a5 5 0 0 1 5 5v13.400a5 5 0 0 1-5 5H33.500L29 50v-3.200h-4a5 5 0 0 1-5-5V28.400a5 5 0 0 1 5-5z" fill="#0d7ff2"/>
<circle cx="26.700" cy="34.700" r="1.700" fill="#fff"/><circle cx="32.200" cy="34.700" r="1.700" fill="#fff"/><circle cx="37.800" cy="34.700" r="1.700" fill="#fff"/></svg>
<div class="abs" style="left:0;top:864px;width:1350px;height:1px;background:#b5d2eb"></div>
</footer>
</body>
</html>
